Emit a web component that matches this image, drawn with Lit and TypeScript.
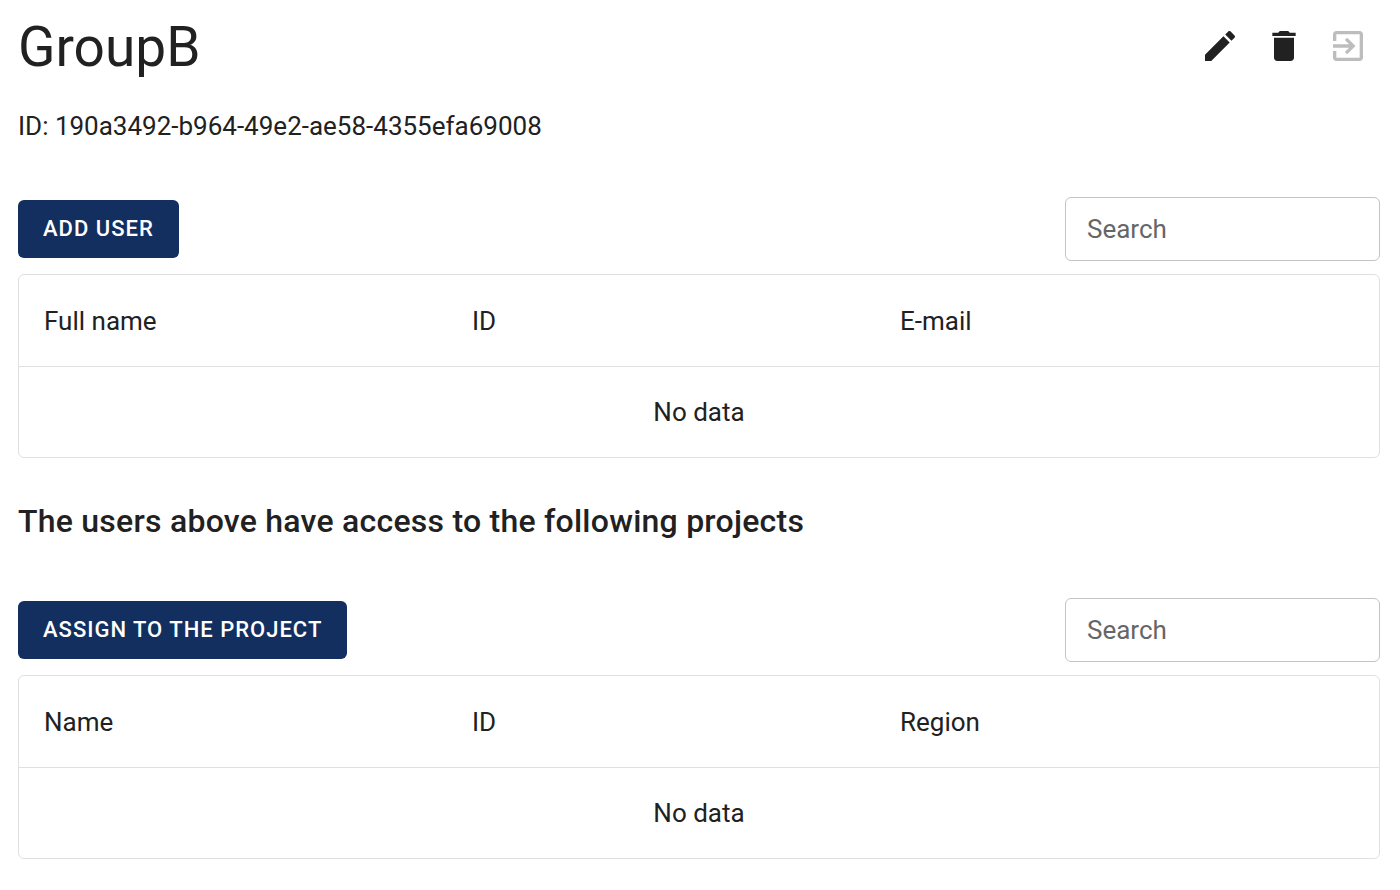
import { LitElement, html, css, svg } from "lit";
import { customElement, property } from "lit/decorators.js";

const ICONS = {
  edit: "M3 17.25V21h3.75L17.81 9.94l-3.75-3.75L3 17.25zM20.71 7.04c.39-.39.39-1.02 0-1.41l-2.34-2.34c-.39-.39-1.02-.39-1.41 0l-1.83 1.83 3.75 3.75 1.83-1.83z",
  remove: "M6 19c0 1.1.9 2 2 2h8c1.1 0 2-.9 2-2V7H6v12zM19 4h-3.5l-1-1h-5l-1 1H5v2h14V4z",
  leave: "M10.09 15.59L11.5 17l5-5-5-5-1.41 1.41L12.67 11H3v2h9.67l-2.58 2.59zM19 3H5c-1.11 0-2 .9-2 2v4h2V5h14v14H5v-4H3v4c0 1.1.89 2 2 2h14c1.1 0 2-.9 2-2V5c0-1.1-.9-2-2-2z",
};

const icon = (d: string) =>
  html`<svg class="icon" viewBox="0 0 24 24" aria-hidden="true">${svg`<path d=${d}></path>`}</svg>`;

@customElement("data-section")
export class DataSection extends LitElement {
  @property() action = "";
  @property({ attribute: false }) columns: string[] = [];

  static styles = css`
    :host {
      display: block;
      font-size: 26px;
    }
    .toolbar {
      display: flex;
      align-items: center;
      justify-content: space-between;
      gap: 16px;
      margin-bottom: 13px;
    }
    .action {
      border: 0;
      border-radius: 6px;
      padding: 10px 25px;
      background: #122f60;
      color: #fff;
      font: 500 22px/38px Roboto, sans-serif;
      letter-spacing: 1px;
      text-transform: uppercase;
      cursor: pointer;
    }
    .search {
      box-sizing: border-box;
      width: 315px;
      min-width: 0;
      padding: 15px 21px;
      border: 1px solid #c4c4c4;
      border-radius: 6px;
      background: transparent;
      color: inherit;
      font: 400 26px/32px Roboto, sans-serif;
    }
    .search::placeholder {
      color: #666;
      opacity: 1;
    }
    .table {
      width: 100%;
      table-layout: fixed;
      border: 1px solid #e0e0e0;
      border-radius: 6px;
      border-collapse: separate;
      border-spacing: 0;
    }
    .head {
      padding: 27px 25px 25px;
      border-bottom: 1px solid #e0e0e0;
      font-weight: 400;
      line-height: 39px;
      text-align: left;
    }
    .tools {
      width: 76px;
      padding: 0;
      border-bottom: 1px solid #e0e0e0;
    }
    .empty {
      padding: 26px 25px;
      line-height: 38px;
      text-align: center;
    }
  `;

  render() {
    return html`
      <div class="toolbar">
        <button class="action" type="button">${this.action}</button>
        <input class="search" type="text" placeholder="Search" aria-label="Search" />
      </div>
      <table class="table">
        <thead>
          <tr>
            ${this.columns.map((name) => html`<th class="head" scope="col">${name}</th>`)}
            <td class="tools"></td>
          </tr>
        </thead>
        <tbody>
          <tr>
            <td class="empty" colspan=${this.columns.length + 1}>No data</td>
          </tr>
        </tbody>
      </table>
    `;
  }
}

@customElement("app-root")
export class AppRoot extends LitElement {
  static styles = css`
    :host {
      display: block;
      box-sizing: border-box;
      padding: 14px 20px 24px 18px;
      background: #fff;
      color: #212121;
      font-family: Roboto, sans-serif;
    }
    .header {
      display: flex;
      align-items: flex-start;
      justify-content: space-between;
    }
    .title {
      margin: 0;
      font-size: 55px;
      font-weight: 400;
      line-height: 66px;
    }
    .actions {
      display: flex;
    }
    .icon-button {
      display: flex;
      padding: 12px;
      border: 0;
      background: none;
      color: #212121;
      cursor: pointer;
    }
    .icon-button:disabled {
      color: #bdbdbd;
      cursor: default;
    }
    .icon {
      width: 40px;
      height: 40px;
      fill: currentColor;
    }
    .identifier {
      margin: 26px 0 51px;
      font-size: 26px;
      line-height: 40px;
    }
    .subtitle {
      margin: 37px 0 51px;
      font-size: 32px;
      font-weight: 500;
      line-height: 52px;
      letter-spacing: 0.0075em;
    }
  `;

  render() {
    return html`
      <main>
        <header class="header">
          <h1 class="title">GroupB</h1>
          <div class="actions">
            <button class="icon-button" type="button" aria-label="Edit">${icon(ICONS.edit)}</button>
            <button class="icon-button" type="button" aria-label="Delete">${icon(ICONS.remove)}</button>
            <button class="icon-button" type="button" aria-label="Leave" disabled>${icon(ICONS.leave)}</button>
          </div>
        </header>
        <p class="identifier">ID: 190a3492-b964-49e2-ae58-4355efa69008</p>
        <data-section action="Add user" .columns=${["Full name", "ID", "E-mail"]}></data-section>
        <h2 class="subtitle">The users above have access to the following projects</h2>
        <data-section action="Assign to the project" .columns=${["Name", "ID", "Region"]}></data-section>
      </main>
    `;
  }
}
